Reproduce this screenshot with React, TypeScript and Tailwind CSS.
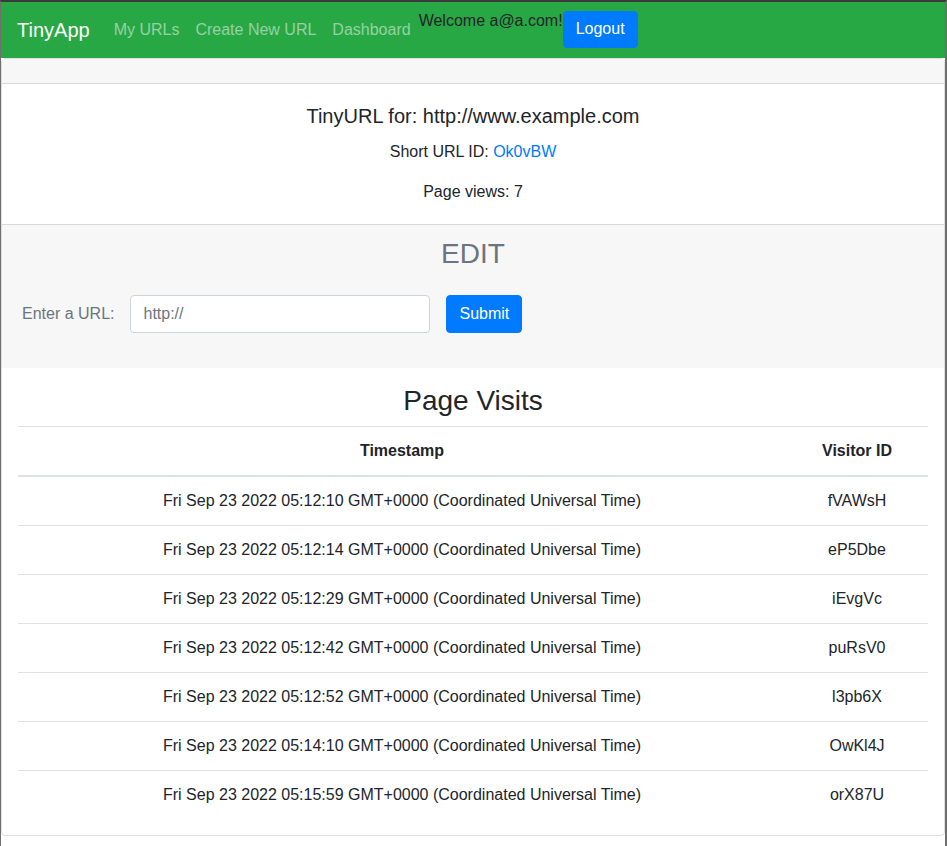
const visits = [
  { ts: "Fri Sep 23 2022 05:12:10 GMT+0000 (Coordinated Universal Time)", id: "fVAWsH" },
  { ts: "Fri Sep 23 2022 05:12:14 GMT+0000 (Coordinated Universal Time)", id: "eP5Dbe" },
  { ts: "Fri Sep 23 2022 05:12:29 GMT+0000 (Coordinated Universal Time)", id: "iEvgVc" },
  { ts: "Fri Sep 23 2022 05:12:42 GMT+0000 (Coordinated Universal Time)", id: "puRsV0" },
  { ts: "Fri Sep 23 2022 05:12:52 GMT+0000 (Coordinated Universal Time)", id: "l3pb6X" },
  { ts: "Fri Sep 23 2022 05:14:10 GMT+0000 (Coordinated Universal Time)", id: "OwKl4J" },
  { ts: "Fri Sep 23 2022 05:15:59 GMT+0000 (Coordinated Universal Time)", id: "orX87U" },
];

function Navbar() {
  return (
    <nav className="flex h-14 items-center bg-[#28a745] px-4">
      <span className="mr-4 text-xl leading-[30px] text-white">TinyApp</span>
      <div className="flex">
        {["My URLs", "Create New URL", "Dashboard"].map((l) => (
          <a key={l} href="#" className="px-2 py-2 leading-6 text-white/50">
            {l}
          </a>
        ))}
      </div>
      <div className="-mt-[2px] flex items-start">
        <span className="-mt-[2px] leading-6 text-[#212529]">Welcome a@a.com!</span>
        <button
          type="button"
          className="h-[37px] rounded-[4px] border border-[#007bff] bg-[#007bff] px-3 leading-6 text-white"
        >
          Logout
        </button>
      </div>
    </nav>
  );
}

export default function App() {
  return (
    <div
      className="min-h-[846px] border-t-2 border-r-2 border-l border-t-[#3a3a3a] border-r-[#6f6f6f] border-l-[#6f6f6f] bg-white text-base text-[#212529]"
      style={{ fontFamily: '"Liberation Sans", Arial, sans-serif' }}
    >
      <Navbar />
      <div className="rounded-[4px] border border-black/[0.125]">
        <div className="h-[25px] border-b border-black/[0.125] bg-[#f7f7f7]" />

        <div className="px-5 pt-5 pb-[20px] text-center">
          <h5 className="text-xl leading-6">TinyURL for: http://www.example.com</h5>
          <p className="mt-[12px] leading-6">
            Short URL ID: <a href="#" className="text-[#007bff]">Ok0vBW</a>
          </p>
          <p className="mt-4 leading-6">Page views: 7</p>
        </div>

        <div className="border-t border-black/[0.125] bg-[#f7f7f7] px-5 pt-3 pb-[35px]">
          <h3 className="text-center text-[28px] leading-[34px] text-[#6c757d]">EDIT</h3>
          <form className="mt-6 flex items-center gap-4">
            <label className="leading-6 text-[#6c757d]">Enter a URL:</label>
            <input
              type="text"
              placeholder="http://"
              className="h-[38px] w-[300px] rounded-[4px] border border-[#ced4da] bg-white px-3 text-base text-[#495057] placeholder:text-[#6c757d]"
            />
            <button
              type="button"
              className="h-[38px] rounded-[4px] border border-[#007bff] bg-[#007bff] px-3 leading-6 text-white"
            >
              Submit
            </button>
          </form>
        </div>

        <div className="px-4 pt-4">
          <h3 className="mb-2 text-center text-[28px] leading-[34px]">Page Visits</h3>
          <table className="mb-4 w-full border-collapse text-center">
            <thead>
              <tr>
                <th className="w-[768px] border-t border-b-2 border-[#dee2e6] p-3 leading-6 font-bold">Timestamp</th>
                <th className="border-t border-b-2 border-[#dee2e6] p-3 leading-6 font-bold">Visitor ID</th>
              </tr>
            </thead>
            <tbody>
              {visits.map((v) => (
                <tr key={v.id}>
                  <td className="border-t border-[#dee2e6] p-3 leading-6">{v.ts}</td>
                  <td className="border-t border-[#dee2e6] p-3 leading-6">{v.id}</td>
                </tr>
              ))}
            </tbody>
          </table>
        </div>
      </div>
    </div>
  );
}
